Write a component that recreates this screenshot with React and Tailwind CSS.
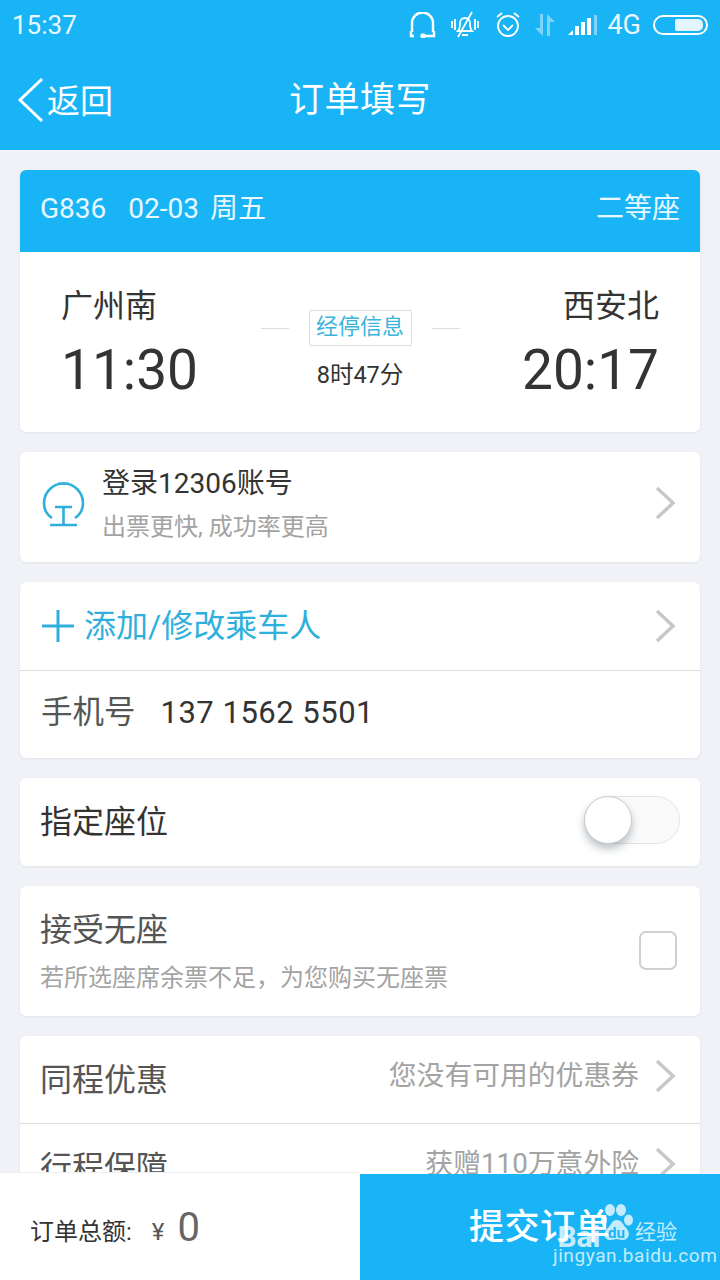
const font = { fontFamily: 'Roboto, "Noto Sans CJK SC", sans-serif' };

function StatusIcons() {
  return (
    <div className="flex items-center">
      {/* headset */}
      <svg width="28" height="26" viewBox="0 0 28 26" fill="none" stroke="#fff" strokeWidth="2.4" className="mr-[13px]">
        <path d="M3 20V11a10.500 10.500 0 0 1 21 0v9" />
        <path d="M2 19v5h3M25 19v5h-10" />
        <circle cx="14" cy="24" r="1.500" fill="#fff" />
      </svg>
      {/* muted bell */}
      <svg width="30" height="28" viewBox="0 0 30 28" fill="none" stroke="#fff" strokeWidth="1.800" className="mr-[14px]">
        <path d="M8 20c2-2 2-5 2-8a5 5 0 0 1 10 0c0 3 0 6 2 8z" />
        <path d="M12 24h6M22 1L8 26M2 10v7M5 8v11M25 8v11M28 10v7" />
      </svg>
      {/* alarm */}
      <svg width="28" height="28" viewBox="0 0 28 28" fill="none" stroke="#fff" strokeWidth="1.800" className="mr-[12px]">
        <circle cx="14" cy="15" r="10" />
        <path d="M9 14l5 5 5-5M3 6l5-4M25 6l-5-4" />
      </svg>
      {/* data arrows */}
      <svg width="22" height="26" viewBox="0 0 22 26" fill="#7fd4fa" className="mr-[11px]">
        <path d="M6 2h3v22l-8-8h5zM13 2l8 8h-5v14h-3z" />
      </svg>
      {/* signal */}
      <svg width="32" height="22" viewBox="0 0 32 22" className="mr-[8px]">
        <path d="M1 21l5-5v5z" fill="#fff" />
        <rect x="8" y="12" width="4" height="9" fill="#fff" />
        <rect x="14" y="8" width="4" height="13" fill="#fff" />
        <rect x="20" y="4" width="4" height="17" fill="#fff" />
        <rect x="27" y="1" width="3" height="20" fill="#7fd4fa" />
      </svg>
      <span className="mr-[12px] text-[27px] leading-none text-white/90">4G</span>
      <div className="flex h-[20px] w-[55px] items-center justify-end rounded-full border-2 border-white pr-[3px]">
        <div className="h-[12px] w-[28px] rounded-r-[5px] rounded-l-[2px] bg-[#e3f5fd]" />
      </div>
    </div>
  );
}

function Arrow({ className = '' }) {
  return (
    <svg width="22" height="34" viewBox="0 0 22 34" fill="none" stroke="#c8c8c8" strokeWidth="3.5" className={`shrink-0 ${className}`}>
      <path d="M3 2l16 15L3 32" />
    </svg>
  );
}

function Card({ className, children }) {
  return <section className={`rounded-[6px] bg-white shadow-[0_1px_3px_rgba(0,0,0,0.07)] ${className}`}>{children}</section>;
}

export default function App() {
  return (
    <div style={font} className="flex h-[1280px] w-[720px] flex-col overflow-hidden bg-[#f0f2f7]">
      <header className="h-[150px] shrink-0 bg-[#18b4f6] text-white">
        <div className="flex h-[50px] items-center justify-between pl-[12px] pr-[12px]">
          <span className="text-[26px] leading-none text-white/90">15:37</span>
          <StatusIcons />
        </div>
        <div className="grid h-[100px] grid-cols-[1fr_auto_1fr] items-center pl-[17px]">
          <div className="flex items-center">
            <svg width="27" height="46" viewBox="0 0 27 46" fill="none" stroke="#fff" strokeWidth="3" className="mr-[3px]">
              <path d="M25 2L3 23l22 21" />
            </svg>
            <span className="mt-[2px] text-[33px] leading-none">返回</span>
          </div>
          <h1 className="-ml-[17px] mt-[1px] text-[35px] font-normal leading-none tracking-[0.5px]">订单填写</h1>
          <div />
        </div>
      </header>

      <main className="flex min-h-0 flex-1 flex-col gap-[20px] overflow-hidden px-[20px] pt-[20px]">
        <Card className="shrink-0 overflow-hidden">
          <div className="flex h-[82px] items-center justify-between bg-[#18b4f6] px-[20px] pb-[4px] text-[28px] text-white/90">
            <div className="flex items-center">
              <span className="mr-[22px]">G836</span>
              <span className="mr-[11px]">02-03</span>
              <span>周五</span>
            </div>
            <span>二等座</span>
          </div>
          <div className="flex h-[180px] items-start px-[41px] pt-[34px] text-[#333]">
            <div className="flex-1">
              <div className="text-[32px] leading-[40px]">广州南</div>
              <div className="mt-[10px] text-[55px] leading-[68px]">11:30</div>
            </div>
            <div className="flex flex-col items-center pt-[24px]">
              <div className="flex items-center gap-[20px]">
                <div className="h-px w-[28px] bg-[#ddd]" />
                <div className="flex h-[36px] w-[103px] items-center justify-center rounded-[2px] border border-[#ddd] pb-[3px] text-[22px] text-[#3ab4dc]">经停信息</div>
                <div className="h-px w-[28px] bg-[#ddd]" />
              </div>
              <div className="mt-[14px] text-[23.500px] leading-[30px]">8时47分</div>
            </div>
            <div className="flex-1 text-right">
              <div className="text-[32px] leading-[40px]">西安北</div>
              <div className="mt-[10px] text-[55px] leading-[68px]">20:17</div>
            </div>
          </div>
        </Card>

        <Card className="flex h-[110px] shrink-0 items-center justify-between pl-[20px] pr-[24px]">
          <div className="flex items-center">
            <svg width="48" height="48" viewBox="0 0 48 48" fill="none" stroke="#2fb0dc" strokeWidth="2.600" className="-mt-[6px] mr-[14px]">
              <path d="M12 38C6 34 4 29 4 23a19.500 19.500 0 0 1 39 0c0 6-2 11-8 15" />
              <path d="M15 27h17M23.500 27v18M10 45h27" />
              <path d="M18 3.500h11" strokeWidth="2" />
            </svg>
            <div className="-mt-[8px]">
              <div className="text-[28px] leading-[40px] text-[#333]">登录12306账号</div>
              <div className="mt-[8px] text-[24px] leading-[30px] text-[#a3a3a3]">出票更快, 成功率更高</div>
            </div>
          </div>
          <Arrow className="-mt-[8px]" />
        </Card>

        <Card className="shrink-0">
          <div className="flex h-[89px] items-center justify-between border-b border-[#ddd] pl-[22px] pr-[24px]">
            <div className="flex items-center text-[32px] text-[#2fb0dc]">
              <svg width="32" height="32" viewBox="0 0 32 32" fill="none" stroke="#2fb0dc" strokeWidth="3" className="mr-[10px]">
                <path d="M16 0v32M0 16h32" />
              </svg>
              <span>添加/修改乘车人</span>
            </div>
            <Arrow />
          </div>
          <div className="flex h-[87px] items-center pb-[3px] pl-[21px] text-[#555]">
            <span className="mr-[25px] text-[31.500px]">手机号</span>
            <span className="text-[31px] tracking-[0.5px] text-[#333]">137 1562 5501</span>
          </div>
        </Card>

        <Card className="flex h-[88px] shrink-0 items-center justify-between pl-[20px] pr-[20px]">
          <span className="text-[32px] text-[#333]">指定座位</span>
          <div className="relative -mt-[4px] h-[48px] w-[96px] rounded-full border border-[#e4e4e4] bg-[#fafafa]">
            <div className="absolute -left-px -top-px h-[48px] w-[48px] rounded-full border border-[#ccc] bg-white shadow-[0_5px_8px_rgba(60,80,100,0.35)]" />
          </div>
        </Card>

        <Card className="flex h-[130px] shrink-0 items-center justify-between pl-[20px] pr-[23px]">
          <div>
            <div className="text-[32px] leading-[40px] text-[#555]">接受无座</div>
            <div className="mt-[13px] text-[24px] leading-[30px] text-[#a3a3a3]">若所选座席余票不足，为您购买无座票</div>
          </div>
          <div className="-mt-[2px] h-[39px] w-[38px] rounded-[7px] border-[2px] border-[#cfcfcf]" />
        </Card>

        <Card className="shrink-0">
          <div className="flex h-[88px] items-center justify-between border-b border-[#ddd] pl-[20px] pr-[24px]">
            <span className="text-[32px] text-[#555]">同程优惠</span>
            <div className="-mt-[8px] flex items-center gap-[15px] text-[27.800px] text-[#a3a3a3]">
              <span>您没有可用的优惠券</span>
              <Arrow />
            </div>
          </div>
          <div className="flex h-[88px] items-center justify-between pl-[20px] pr-[24px]">
            <span className="text-[32px] text-[#555]">行程保障</span>
            <div className="-mt-[8px] flex items-center gap-[15px] text-[27.800px] text-[#a3a3a3]">
              <span>获赠110万意外险</span>
              <Arrow />
            </div>
          </div>
        </Card>
      </main>

      <footer className="relative flex h-[106px] shrink-0">
        <div className="-mt-[2px] flex h-[108px] w-[360px] items-center border-t border-[#eee] bg-white pl-[30px]">
          <span className="mt-[10px] text-[24px] text-[#333]">订单总额:</span>
          <span className="ml-[20px] mt-[10px] text-[24px] text-[#555]">¥</span>
          <span className="ml-[13px] mt-[2px] text-[40px] text-[#666]">0</span>
        </div>
        <button className="relative w-[360px] bg-[#18b4f6] pt-[2px] text-[35px] font-medium tracking-[0.5px] text-white">
          提交订单
          <div className="absolute left-[197px] top-[29px] flex items-start text-white/75">
            <span className="mt-[16px] w-[44px] text-[30px] font-bold leading-[36px] tracking-normal">Bai</span>
            <div className="relative h-[38px] w-[34px]">
              <svg width="34" height="38" viewBox="0 0 34 38" fill="currentColor">
                <ellipse cx="2.500" cy="17" rx="3.500" ry="5" />
                <ellipse cx="9" cy="7" rx="5" ry="6" />
                <ellipse cx="20" cy="7" rx="5" ry="6" />
                <ellipse cx="27.500" cy="17" rx="4.500" ry="5.500" />
                <path d="M16 17c5 0 6 5 10 9 4 5 1 11-4 11-3 0-4-1-6-1s-4 1-7 1c-5 0-8-6-3-11 4-4 5-9 10-9z" />
              </svg>
              <span className="absolute left-[7px] top-[23px] text-[15px] font-bold leading-none tracking-normal text-[#18b4f6]">du</span>
            </div>
            <span className="mt-[17px] text-[21px] font-normal leading-[24px] tracking-normal">经验</span>
          </div>
          <div className="absolute left-[193px] top-[72px] text-[19px] font-normal leading-none tracking-[0.6px] text-white/75">jingyan.baidu.com</div>
        </button>
      </footer>
    </div>
  );
}
